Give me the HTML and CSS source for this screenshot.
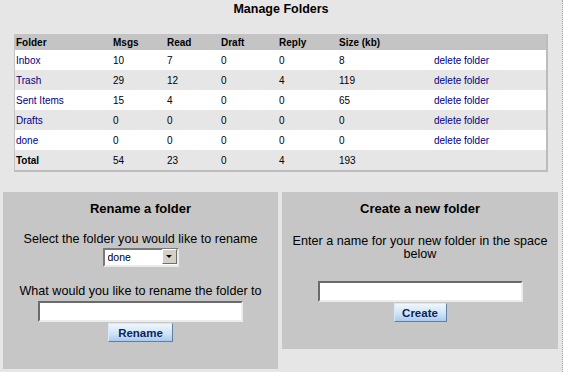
FILE: index.html
```html
<!DOCTYPE html>
<html lang="en">
<head>
    <meta charset="UTF-8">
    <title>Manage Folders</title>
    <link rel="stylesheet" href="styles.css">
</head>
<body>

    <div class="page">
        <h1 class="title">Manage Folders</h1>

        <table class="folders">
            <thead>
                <tr>
                    <th class="c-name">Folder</th>
                    <th class="c-msgs">Msgs</th>
                    <th class="c-read">Read</th>
                    <th class="c-draft">Draft</th>
                    <th class="c-reply">Reply</th>
                    <th class="c-size">Size (kb)</th>
                    <th class="c-action"></th>
                </tr>
            </thead>
            <tbody>
                <tr>
                    <td><a href="#">Inbox</a></td>
                    <td>10</td><td>7</td><td>0</td><td>0</td><td>8</td>
                    <td><a href="#">delete folder</a></td>
                </tr>
                <tr class="alt">
                    <td><a href="#">Trash</a></td>
                    <td>29</td><td>12</td><td>0</td><td>4</td><td>119</td>
                    <td><a href="#">delete folder</a></td>
                </tr>
                <tr>
                    <td><a href="#">Sent Items</a></td>
                    <td>15</td><td>4</td><td>0</td><td>0</td><td>65</td>
                    <td><a href="#">delete folder</a></td>
                </tr>
                <tr class="alt">
                    <td><a href="#">Drafts</a></td>
                    <td>0</td><td>0</td><td>0</td><td>0</td><td>0</td>
                    <td><a href="#">delete folder</a></td>
                </tr>
                <tr>
                    <td><a href="#">done</a></td>
                    <td>0</td><td>0</td><td>0</td><td>0</td><td>0</td>
                    <td><a href="#">delete folder</a></td>
                </tr>
                <tr class="alt total">
                    <td>Total</td>
                    <td>54</td><td>23</td><td>0</td><td>4</td><td>193</td>
                    <td></td>
                </tr>
            </tbody>
        </table>

        <div class="panels">
            <div class="panel rename">
                <h3>Rename a folder</h3>
                <p class="prompt">Select the folder you would like to rename</p>
                <span class="select-wrap">
                    <select id="oldname">
                        <option>Inbox</option>
                        <option>Trash</option>
                        <option>Sent Items</option>
                        <option>Drafts</option>
                        <option selected>done</option>
                    </select>
                </span>
                <p class="prompt second">What would you like to rename the folder to</p>
                <input type="text" id="newname" class="field">
                <button class="btn btn-rename">Rename</button>
            </div>

            <div class="panel create">
                <h3>Create a new folder</h3>
                <p class="prompt">Enter a name for your new folder in the space below</p>
                <input type="text" id="foldername" class="field">
                <button class="btn btn-create">Create</button>
            </div>
        </div>
    </div>

</body>
</html>
```

FILE: styles.css
```css
body {
    margin: 0;
    background-color: #e6e6e6;
    font-family: "Liberation Sans", Arial, sans-serif;
    color: #000;
}

.page {
    width: 562px;
    min-height: 372px;
    border-right: 1px dotted #a8a8a8;
}

.title {
    margin: 0 0 17px 0;
    padding-top: 1px;
    font-size: 12.5px;
    line-height: 16px;
    text-align: center;
}

/* folder list */

.folders {
    margin-left: 14px;
    width: 534px;
    table-layout: fixed;
    border-collapse: separate;
    border-spacing: 0;
    border: 1px solid #c4c4c4;
    border-right: 2px solid #bcbcbc;
    border-bottom: 2px solid #bcbcbc;
    font-size: 10px;
}

.folders th, .folders td {
    box-sizing: border-box;
    padding: 0 0 0 1px;
    text-align: left;
    white-space: nowrap;
}

.folders th {
    height: 15px;
    background-color: #c4c4c4;
    font-weight: bold;
}

.folders td {
    height: 20px;
    background-color: #fff;
}

.folders tr.alt td {
    background-color: #e6e6e6;
}

.folders tr.total td:first-child {
    font-weight: bold;
}

.folders a {
    color: #000080;
    text-decoration: none;
}

.c-name { width: 97px; }
.c-msgs { width: 54px; }
.c-read { width: 54px; }
.c-draft { width: 58px; }
.c-reply { width: 60px; }
.c-size { width: 95px; }
.c-action { width: 113px; }

/* rename / create boxes */

.panels {
    display: flex;
    align-items: flex-start;
    gap: 4px;
    margin-top: 20px;
    padding-left: 3px;
}

.panel {
    background-color: #c6c6c6;
    padding: 9px 6px 27px 6px;
    text-align: center;
}

.rename {
    width: 263px;
}

.create {
    width: 264px;
}

.panel h3 {
    margin: 0;
    font-size: 13px;
    line-height: 15px;
}

.prompt {
    margin: 17px 0 0 0;
    font-size: 12.6px;
    line-height: 13px;
}

.prompt.second {
    margin-top: 19px;
}

.create .prompt {
    margin-top: 19px;
}

.select-wrap {
    position: relative;
    display: block;
    width: 76px;
    height: 19px;
    margin: 1px auto 0 auto;
}

.select-wrap select {
    appearance: none;
    -webkit-appearance: none;
    box-sizing: border-box;
    width: 76px;
    height: 19px;
    padding: 0 0 0 3px;
    border: 2px solid;
    border-color: #7a7a7a #eaeaea #eaeaea #7a7a7a;
    border-radius: 0;
    background-color: #fff;
    font-family: "Liberation Sans", Arial, sans-serif;
    font-size: 10.5px;
    color: #000;
    outline: none;
}

.select-wrap::after {
    content: "";
    position: absolute;
    top: 2px;
    right: 2px;
    width: 13px;
    height: 13px;
    border: 1px solid;
    border-color: #fff #6e6e6e #6e6e6e #fff;
    background-color: #d4d0c8;
}

.select-wrap::before {
    content: "";
    position: absolute;
    z-index: 1;
    top: 8px;
    right: 7px;
    border-left: 3px solid transparent;
    border-right: 3px solid transparent;
    border-top: 3px solid #000;
}

.field {
    display: block;
    box-sizing: border-box;
    width: 205px;
    height: 21px;
    margin: 3px auto 0 auto;
    padding: 0 2px;
    border: 2px solid;
    border-color: #6a6a6a #ececec #ececec #6a6a6a;
    background-color: #fff;
    outline: none;
}

.create .field {
    margin-top: 20px;
}

.btn {
    display: block;
    box-sizing: border-box;
    height: 19px;
    margin: 1px auto 0 auto;
    padding: 0;
    border: 1px solid;
    border-color: #d9e8f7 #5f7f9f #5f7f9f #d9e8f7;
    background: linear-gradient(#eef6fd, #cfe4f8 55%, #a9cbed);
    font-family: "Liberation Sans", Arial, sans-serif;
    font-size: 11.5px;
    font-weight: bold;
    color: #0b1f5c;
    cursor: pointer;
}

.btn-rename {
    width: 65px;
}

.btn-create {
    width: 53px;
}
```
